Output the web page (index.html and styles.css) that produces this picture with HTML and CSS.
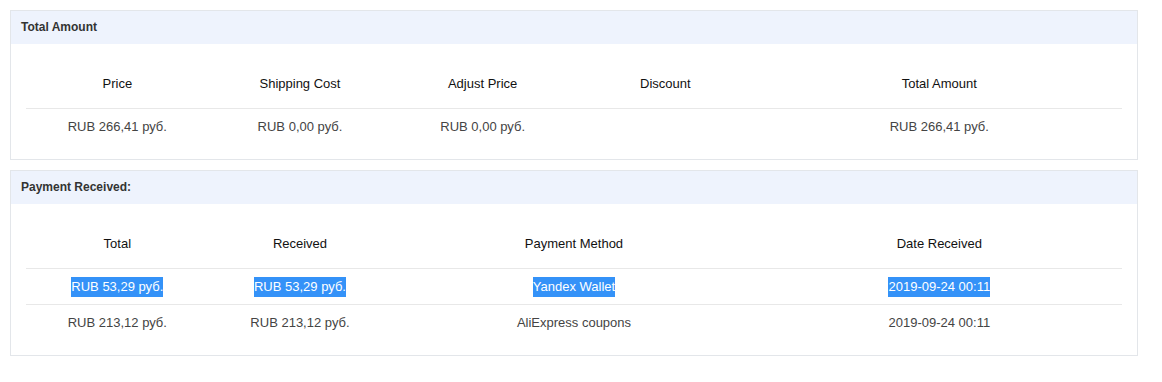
FILE: index.html
```html
<!DOCTYPE html>
<html>
<head>
  <meta charset="UTF-8">
  <title>Order Payment</title>
  <link rel="stylesheet" href="styles.css">
</head>
<body>
  <div class="panel">
    <div class="panel-head">Total Amount</div>
    <div class="panel-body">
      <table class="grid">
        <colgroup>
          <col class="w1"><col class="w1"><col class="w1"><col class="w1"><col class="w2">
        </colgroup>
        <tr>
          <th>Price</th>
          <th>Shipping Cost</th>
          <th>Adjust Price</th>
          <th>Discount</th>
          <th>Total Amount</th>
        </tr>
        <tr>
          <td>RUB 266,41 руб.</td>
          <td>RUB 0,00 руб.</td>
          <td>RUB 0,00 руб.</td>
          <td></td>
          <td>RUB 266,41 руб.</td>
        </tr>
      </table>
    </div>
  </div>

  <div class="panel">
    <div class="panel-head">Payment Received:</div>
    <div class="panel-body">
      <table class="grid">
        <colgroup>
          <col class="w1"><col class="w1"><col class="w2"><col class="w2">
        </colgroup>
        <tr>
          <th>Total</th>
          <th>Received</th>
          <th>Payment Method</th>
          <th>Date Received</th>
        </tr>
        <tr>
          <td><span class="sel">RUB 53,29 руб.</span></td>
          <td><span class="sel">RUB 53,29 руб.</span></td>
          <td><span class="sel">Yandex Wallet</span></td>
          <td><span class="sel">2019-09-24 00:11</span></td>
        </tr>
        <tr>
          <td>RUB 213,12 руб.</td>
          <td>RUB 213,12 руб.</td>
          <td>AliExpress coupons</td>
          <td>2019-09-24 00:11</td>
        </tr>
      </table>
    </div>
  </div>
</body>
</html>
```

FILE: styles.css
```css
body {
  margin: 0;
  padding: 10px 24px 10px 10px;
  font-family: Arial, "Liberation Sans", sans-serif;
  font-size: 12px;
  color: #333;
  background: #fff;
}

.panel {
  border: 1px solid #e3e6ea;
  margin-bottom: 10px;
}

.panel-head {
  background: #eef3fd;
  height: 33px;
  line-height: 33px;
  padding-left: 10px;
  font-weight: bold;
  color: #333;
}

.panel-body {
  padding: 15px;
}

.grid {
  width: 100%;
  border-collapse: collapse;
  table-layout: fixed;
  font-size: 13px;
}
.grid .w1 { width: 16.666%; }
.grid .w2 { width: 33.333%; }

.grid th {
  height: 49px;
  font-weight: normal;
  color: #111;
  text-align: center;
  border-bottom: 1px solid #e8e8e8;
  padding: 0;
}

.grid td {
  height: 35px;
  text-align: center;
  color: #444;
  padding: 0;
  border-top: 1px solid #e8e8e8;
}
.grid tr:nth-child(2) td {
  border-top: none;
}

.sel {
  background: #3492f8;
  color: #fff;
  padding: 2px 0 3px;
}
```
